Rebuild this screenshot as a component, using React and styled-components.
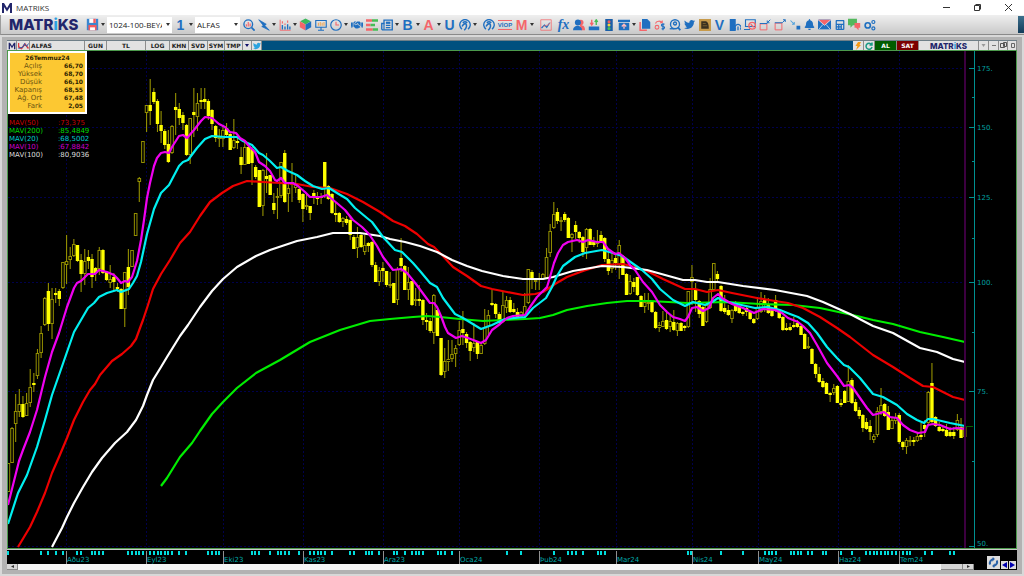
import React from 'react';
import styled, { createGlobalStyle } from 'styled-components';
import { FaBell, FaCalculator, FaHandshake, FaTwitter } from 'react-icons/fa';

const GlobalStyle = createGlobalStyle`
  * {
    box-sizing: border-box;
  }

  body {
    margin: 0;
    background: #c3c3c3;
    font-family: "Open Sans", sans-serif;
  }

  button {
    margin: 0;
    padding: 0;
    border: 0;
    background: none;
    font: inherit;
    color: inherit;
  }
`;

const BLUE = '#1f6fc0';
const RED = '#f4656a';
const NAVY = '#22266b';

// Window shell
const Screen = styled.div`
  display: flex;
  flex-direction: column;
  height: 100vh;
`;

const TitleBar = styled.header`
  display: flex;
  align-items: center;
  flex: none;
  height: 15px;
  padding-left: 1px;
  background: #ffffff;
`;

const Title = styled.h1`
  flex: 1;
  margin: 0 0 0 3px;
  font-size: 8px;
  font-weight: 400;
  line-height: 14px;
  color: #333333;
`;

const WindowButton = styled.button`
  display: flex;
  align-items: center;
  justify-content: center;
  width: 31px;
  height: 15px;
`;

// Toolbar
const Toolbar = styled.nav`
  display: flex;
  align-items: center;
  flex: none;
  height: 20px;
  padding-left: 8px;
  border-left: 1px solid #9c9c9c;
  border-bottom: 1px solid #8a8a8a;
  background: linear-gradient(#efefef, #c9c9c9);
`;

const Brand = styled.div`
  width: ${(props) => (props.$small ? 'auto' : '76px')};
  font-family: Inter, sans-serif;
  font-size: ${(props) => (props.$small ? '8px' : '15px')};
  font-weight: 800;
  line-height: 1;
  color: ${NAVY};

  i {
    font-style: normal;
    color: #2a9fe0;
  }
`;

const ToolButton = styled.button`
  display: flex;
  align-items: center;
  justify-content: center;
  flex: none;
  width: ${(props) => (props.$wide ? '18px' : '15px')};
  height: 16px;
  color: ${(props) => props.$color || BLUE};
  font-family: ${(props) => props.$font || '"Liberation Sans", sans-serif'};
  font-size: ${(props) => (props.$wide ? '6px' : '14px')};
  font-weight: 700;
  line-height: 16px;

  span {
    border: solid ${RED};
    border-width: 1px 0;
    line-height: 8px;
  }
`;

const CaretButton = styled.button`
  display: flex;
  align-items: center;
  justify-content: center;
  flex: none;
  width: 6px;
  height: 16px;
`;

const Gap = styled.span`
  flex: none;
  width: 3px;
`;

const Combo = styled.label`
  display: flex;
  align-items: center;
  flex: none;
  width: ${(props) => (props.$wide ? '65px' : '45px')};
  height: 16px;
  margin: 0 1px;
  padding-right: 2px;
  background: #ffffff;

  select {
    flex: 1;
    min-width: 0;
    height: 16px;
    margin-right: 4px;
    padding: 0 0 0 2px;
    border: 0;
    appearance: none;
    background: transparent;
    font-family: "Open Sans", sans-serif;
    font-size: 8px;
    color: #222222;
  }
`;

const ToolGrid = styled.div`
  display: grid;
  grid-template-columns: repeat(16, 1fr);
  width: 235px;
`;

const DockHandle = styled.div`
  align-self: stretch;
  width: 6px;
  margin: 1px 0 1px auto;
  background: linear-gradient(#3d6f8c, #123c5a);
`;

// Chart window
const Frame = styled.main`
  display: flex;
  flex-direction: column;
  flex: 1;
  min-height: 0;
  padding: 3px 5px 4px 5px;
  border: 2px solid #d8d8d8;
  background: #b2b2b2;
`;

const PanelBar = styled.div`
  display: flex;
  flex: none;
  height: 10px;
  border-top: 1px solid #6f7f88;
  background: #00507f;
`;

const Cell = styled.button`
  display: flex;
  align-items: center;
  justify-content: ${(props) => (props.$left ? 'flex-start' : 'center')};
  flex: none;
  width: ${(props) => props.$width}px;
  padding-left: ${(props) => (props.$left ? '1px' : '0')};
  border-right: 1px solid #8d8d8d;
  background: ${(props) => props.$bg || '#e2e2e2'};
  color: ${(props) => props.$color || '#222222'};
  font-family: "DejaVu Sans", sans-serif;
  font-size: 6px;
  font-weight: 700;
  line-height: 9px;
`;

const Spacer = styled.span`
  flex: 1;
`;

const Plot = styled.section`
  display: grid;
  flex: 1;
  min-height: 0;
  border: 1px solid #4c9a4c;
  background: #000000;

  > * {
    grid-area: 1 / 1;
  }
`;

const ChartSvg = styled.svg`
  display: block;
  width: 100%;
  height: 100%;
  min-height: 0;
  font-family: "DejaVu Sans", sans-serif;
  font-size: 7px;
`;

const Info = styled.aside`
  justify-self: start;
  align-self: start;
  font-family: "DejaVu Sans", sans-serif;
`;

const QuoteTable = styled.table`
  width: 79px;
  padding: 1px 2px 2px;
  border: 2px solid #ffffff;
  border-spacing: 0;
  background: #fcc832;
  line-height: 8px;

  th,
  td {
    height: 8px;
    padding: 0;
    text-align: right;
  }

  thead th {
    text-align: center;
    font-size: 6px;
    color: #2c2200;
  }

  tbody th {
    width: 30px;
    font-size: 7px;
    font-weight: 400;
    color: #6b5410;
  }

  td {
    font-size: 6px;
    font-weight: 700;
    color: #2c2200;
  }
`;

const AverageList = styled.ul`
  margin: 5px 0 0;
  padding: 0 0 0 1px;
  list-style: none;
`;

const Average = styled.li`
  display: flex;
  font-size: 7px;
  line-height: 8px;
  color: ${(props) => props.$color};

  span:first-child {
    width: 49px;
  }
`;

const Footer = styled.footer`
  display: flex;
  flex: none;
  height: 21px;
  border-top: 1px solid #c8c8c8;
  background: #000000;
`;

const Timeline = styled.div`
  display: flex;
  flex-direction: column;
  flex: 1;
  min-width: 0;
`;

const DateAxis = styled.div`
  height: 14px;
`;

const ScrollBar = styled.div`
  display: flex;
  height: 6px;
  background: #f6f6f6;
`;

const ScrollPart = styled.button`
  display: flex;
  align-items: center;
  justify-content: center;
  width: ${(props) => props.$width}px;
  height: 6px;
  border-right: 1px solid #8a8a8a;
  border-bottom: 1px solid #8a8a8a;
  background: #d6d6d6;
`;

const Corner = styled.div`
  display: flex;
  align-items: flex-end;
  justify-content: flex-end;
  gap: 1px;
  width: 43px;
  padding: 0 1px 1px 0;
`;

const CornerButton = styled.button`
  display: flex;
  align-items: center;
  justify-content: center;
  width: ${(props) => (props.$big ? '13px' : '7px')};
  height: ${(props) => (props.$big ? '13px' : '8px')};
  background: #dddddd;
`;

// Icons
const Icon = ({ size = 12, children }) => (
  <svg width={size} height={size} viewBox="0 0 16 16" fill="none" stroke={BLUE} strokeWidth="1.8" aria-hidden="true">
    {children}
  </svg>
);

const Caret = ({ width = 4, color = '#333333' }) => (
  <svg width={width} height="3" viewBox="0 0 4 3" aria-hidden="true">
    <path d="M0 0h4L2 3z" fill={color} />
  </svg>
);

const LogoM = ({ size = 12 }) => (
  <svg width={size} height={size} viewBox="0 0 12 12" aria-hidden="true">
    <path d="M1 11V1h2l3 5 3-5h2v10H9V5L6 9.500 3 5v6z" fill={NAVY} />
  </svg>
);

const Dropdown = ({ label }) => (
  <CaretButton aria-label={label}><Caret /></CaretButton>
);

const SaveIcon = () => (
  <Icon size={13}>
    <path d="M1 1h14v14H1z" fill="#3b86cf" stroke="none" />
    <path d="M4 1h8v5H4z" fill="#ffffff" stroke="none" />
    <path d="M9 1h3v5H9zM3 8.500h10V15H3z" fill="#f25c60" stroke="none" />
    <path d="M5 11.500h6V15H5z" fill="#ffffff" stroke="none" />
  </Icon>
);

const SearchIcon = () => (
  <Icon>
    <circle cx="7" cy="7" r="5.800" />
    <path d="M11.500 11.500L15.500 15.500" strokeWidth="2.400" />
    <path d="M4.500 10V7M7 10V4M9.500 10V6" stroke={RED} strokeWidth="1.500" />
  </Icon>
);

const BoltIcon = () => (
  <Icon>
    <path d="M1 1l10 6-2 1.500 6 6.500-10-5 2-1.500z" fill={BLUE} strokeWidth="1" />
  </Icon>
);

const BarsIcon = () => (
  <Icon>
    <path d="M1.500 1v14h14" stroke={RED} strokeWidth="1.200" />
    <path d="M4.500 14V8M8 14V10M11.500 14V7M14.500 14V10" />
    <path d="M4.500 6V3M8 8V6M11.500 5V2" stroke={RED} strokeWidth="1.500" />
  </Icon>
);

const PieIcon = () => (
  <Icon size={13}>
    <path d="M8 8L1.500 4 8 .500 14.500 4z" fill="#3db85c" stroke="none" />
    <path d="M8 8L1 4v7.500L8 15.500z" fill={RED} stroke="none" />
    <path d="M8 8l7-4v7.500L8 15.500z" fill={BLUE} stroke="none" />
  </Icon>
);

const MonitorIcon = () => (
  <Icon>
    <path d="M1 2h14v9H1zM4 15h8M8 11v4" strokeWidth="1.500" />
    <path d="M4.500 9V5M7 9V4M9.500 9V5M12 9V4" stroke="#f0a24a" strokeWidth="1.300" />
  </Icon>
);

const ClockIcon = () => (
  <Icon>
    <circle cx="8" cy="8" r="7" strokeWidth="1.600" />
    <path d="M8 3.500V8h4" stroke={RED} strokeWidth="1.500" />
  </Icon>
);

const DepthIcon = () => (
  <Icon>
    <path d="M0 2h8M0 8h6M0 14h9" stroke={RED} strokeWidth="3.500" />
    <path d="M8 2h8M6 8h6M9 14h7" stroke="#45bd55" strokeWidth="3.500" />
  </Icon>
);

const NewsIcon = () => (
  <Icon>
    <path d="M4 1.500h11v13H2.500A1.500 1.500 0 0 1 1 13V6h3z" />
    <path d="M4 6v8M6.500 8.500h6M6.500 11.500h6" strokeWidth="1.500" />
    <path d="M6.500 3.500h6v3h-6z" fill={BLUE} stroke="none" />
  </Icon>
);

const GlobeIcon = () => (
  <Icon>
    <path d="M4 13.500A7 7 0 1 1 12 13.500" />
    <path d="M7 15c3-3 4-6 2-9-3 0-4 2-5 4M5 5c2-2 5-2 6 0" strokeWidth="2" />
  </Icon>
);

const TrendIcon = () => (
  <Icon>
    <path d="M1 1h14v14H1z" stroke={RED} strokeWidth="1" />
    <path d="M2 12l4-4 3 3 4-6" strokeWidth="1.600" />
    <path d="M4 10l3-1 3-1 4-3" stroke={RED} strokeWidth="1" />
  </Icon>
);

const UsersIcon = () => (
  <Icon>
    <circle cx="10.500" cy="4.500" r="3.500" fill={RED} stroke="none" />
    <path d="M9 8c6 0 7 3 7 7h-5z" fill={RED} stroke="none" />
    <circle cx="6.500" cy="4.500" r="4" fill={BLUE} stroke="none" />
    <path d="M0 15c0-8 12-8 12 0z" fill={BLUE} stroke="none" />
  </Icon>
);

const TrayIcon = () => (
  <Icon>
    <path d="M1 10h14v5H1z" fill={BLUE} stroke="none" />
    <path d="M5 1v6M3 5l2 3 2-3" stroke={RED} />
    <path d="M11 8V2M9 4l2-3 2 3" stroke="#45bd55" />
  </Icon>
);

const TrafficIcon = () => (
  <Icon>
    <path d="M3 0h10v16H3z" fill="#1b5fa8" stroke="none" />
    <circle cx="8" cy="3.500" r="2" fill="#f25c60" stroke="none" />
    <circle cx="8" cy="8" r="2" fill="#f4d83c" stroke="none" />
    <circle cx="8" cy="12.500" r="2" fill="#45c555" stroke="none" />
  </Icon>
);

const ArchiveIcon = () => (
  <Icon>
    <path d="M0 1h16v3H0zM1 5h14v10H1z" fill={BLUE} stroke="none" />
    <path d="M8 13V8M5 10l3-3 3 3" stroke="#ffb9bb" />
  </Icon>
);

const CopyIcon = () => (
  <Icon>
    <path d="M1.500 4v11h9" stroke={RED} strokeWidth="2" />
    <path d="M4 0h7l4 4v9H4z" fill={BLUE} stroke="none" />
  </Icon>
);

const ExchangeIcon = () => (
  <Icon>
    <path d="M2 6c1-4 7-4 9-1M11 2v3H8" stroke={RED} strokeWidth="1.400" />
    <circle cx="4" cy="11" r="2.500" stroke={RED} strokeWidth="1.400" />
    <path d="M14 7c-5-2-5 3-2 3s3 4-2 3M12 6v9" strokeWidth="1.500" />
  </Icon>
);

const FindIcon = () => (
  <Icon>
    <circle cx="8" cy="7" r="6" />
    <path d="M12 11l3 4" strokeWidth="2.500" />
    <circle cx="8" cy="6" r="2" />
    <path d="M1 13h6" />
  </Icon>
);

const LedgerIcon = () => (
  <Icon>
    <path d="M0 0h16v16H0z" fill="#c79a4a" stroke="none" />
    <path d="M3 3h6c3 1 4 4 4 10H3z" fill="#3a3020" stroke="none" />
    <path d="M5 6h4M5 9h6" stroke="#8a6c34" strokeWidth="1" />
  </Icon>
);

const ReportIcon = () => (
  <Icon>
    <path d="M1 0h8v16H1z" fill={BLUE} stroke="none" />
    <path d="M9 14a4 4 0 1 1 6 0M12 10v5" strokeWidth="1.700" />
  </Icon>
);

const BlockedIcon = () => (
  <Icon>
    <path d="M2 1h13v9H2zM0 14h8" strokeWidth="1.500" />
    <circle cx="11" cy="9" r="4.500" stroke={RED} />
    <path d="M9 7l4 4" stroke={RED} />
  </Icon>
);

const ShrinkIcon = () => (
  <Icon>
    <path d="M1.500 6.500h9v8h-9z" stroke={RED} strokeWidth="1.300" />
    <path d="M1 6h10M15 1l-4 4M11 2v3h3" strokeWidth="1.300" />
  </Icon>
);

const ExpandIcon = () => (
  <Icon>
    <path d="M1.500 5.500h9v9h-9z" stroke={RED} strokeWidth="1.300" />
    <path d="M1 5h10M11 5l4-4M12 1h3v3" strokeWidth="1.300" />
  </Icon>
);

const SnapIcon = () => (
  <Icon>
    <path d="M2 2l5 5M7 4v3H4" stroke="#52a2dc" strokeWidth="1.400" />
    <path d="M10 9h5v5h-5z" fill={BLUE} stroke="none" />
  </Icon>
);

const MailIcon = () => (
  <Icon size={13}>
    <path d="M0 2h16v12H0z" fill={BLUE} stroke="none" />
    <path d="M0 2h16L8 9z" fill={RED} stroke="none" />
    <path d="M0 2l8 7 8-7M1 14l5-6M15 14l-5-6" stroke="#ffffff" strokeWidth="0.800" />
  </Icon>
);

const ChatIcon = () => (
  <Icon size={13}>
    <path d="M0 1h11v8H6l-3 3V9H0z" fill="#52b85c" stroke="none" />
    <path d="M8 6h7v6h-2v3l-3-3H8z" fill={RED} stroke="none" />
  </Icon>
);

const GearsIcon = () => (
  <Icon>
    <circle cx="5" cy="8.500" r="3.500" strokeWidth="2.200" />
    <circle cx="12.500" cy="4" r="2" strokeWidth="1.600" />
    <circle cx="12.500" cy="12.500" r="2" strokeWidth="1.600" />
  </Icon>
);

const RefreshIcon = ({ color = '#1a9a86', size = 8 }) => (
  <svg width={size} height={size} viewBox="0 0 16 16" fill="none" stroke={color} strokeWidth="3" aria-hidden="true">
    <path d="M13 5A6 6 0 1 0 14 10M14 1v5H9" />
  </svg>
);

// Chart data: candles are [high, open, close, low] in chart units, y grows downwards
const CANDLES = [
  [463, 492, 463, 492], [427, 463, 428, 463], [394, 424, 411, 442], [389, 412, 404, 417], [396, 404, 417, 418],
  [393, 416, 403, 416], [369, 403, 387, 407], [373, 383, 384, 392], [349, 376, 353, 379], [326, 353, 333, 358],
  [297, 325, 298, 326], [283, 291, 324, 331], [288, 324, 299, 339], [288, 293, 295, 303], [289, 291, 299, 306],
  [262, 288, 262, 289], [235, 265, 261, 284], [247, 260, 256, 269], [239, 256, 244, 257], [245, 245, 261, 262],
  [254, 260, 274, 292], [249, 274, 261, 285], [250, 257, 261, 269], [254, 259, 277, 288], [267, 268, 273, 281],
  [247, 269, 250, 275], [249, 250, 273, 274], [271, 272, 280, 281], [265, 283, 279, 288], [273, 277, 282, 291],
  [283, 287, 289, 292], [288, 289, 309, 309], [272, 309, 272, 327], [249, 267, 287, 295], [250, 267, 250, 267],
  [213, 236, 213, 236], [177, 182, 178, 202], [141, 163, 141, 163], [105, 113, 105, 132], [79, 105, 111, 125],
  [88, 92, 102, 104], [99, 101, 124, 132], [111, 125, 131, 143], [129, 131, 145, 149], [130, 144, 162, 163],
  [125, 153, 126, 154], [93, 107, 110, 135], [103, 109, 118, 125], [112, 115, 123, 130], [124, 125, 155, 156],
  [118, 155, 118, 164], [88, 112, 115, 137], [93, 117, 103, 131], [88, 100, 102, 109], [88, 99, 102, 109],
  [99, 101, 116, 120], [109, 110, 124, 130], [125, 126, 138, 142], [129, 139, 137, 147], [125, 139, 130, 147],
  [123, 128, 135, 137], [132, 134, 150, 150], [119, 148, 140, 149], [137, 141, 143, 149], [147, 157, 165, 174],
  [140, 165, 147, 165], [146, 147, 164, 164], [147, 149, 163, 185], [165, 167, 177, 179], [170, 170, 207, 207],
  [169, 206, 170, 216], [153, 176, 179, 193], [175, 175, 195, 195], [193, 203, 210, 214], [188, 198, 196, 219],
  [162, 196, 162, 198], [150, 153, 202, 203], [183, 194, 188, 212], [163, 185, 182, 202], [174, 188, 183, 193],
  [187, 189, 200, 203], [193, 194, 209, 222], [193, 207, 205, 210], [206, 206, 213, 220], [190, 193, 196, 204],
  [192, 197, 198, 205], [193, 196, 198, 204], [162, 162, 187, 198], [185, 186, 199, 200], [193, 194, 213, 214],
  [203, 213, 214, 222], [212, 213, 222, 223], [217, 222, 218, 227], [216, 219, 223, 225], [217, 220, 235, 240],
  [235, 237, 249, 249], [227, 248, 237, 258], [234, 235, 247, 248], [235, 252, 245, 255], [242, 243, 246, 252],
  [241, 242, 265, 267], [262, 265, 282, 282], [267, 282, 270, 286], [262, 268, 271, 282], [271, 271, 285, 287],
  [272, 286, 284, 288], [283, 283, 303, 303], [267, 300, 269, 305], [238, 258, 266, 272], [265, 266, 290, 290],
  [267, 290, 282, 300], [281, 281, 305, 306], [288, 301, 299, 306], [285, 299, 301, 306], [299, 300, 320, 325],
  [313, 320, 322, 330], [318, 321, 331, 333], [294, 333, 295, 344], [309, 310, 336, 336], [338, 338, 375, 376],
  [348, 372, 361, 378], [340, 362, 359, 371], [340, 359, 354, 362], [345, 354, 348, 367], [321, 345, 330, 346],
  [311, 329, 333, 345], [332, 334, 343, 348], [341, 342, 351, 361], [323, 348, 343, 352], [341, 342, 354, 359],
  [344, 354, 345, 354], [309, 344, 327, 345], [310, 327, 315, 335], [290, 303, 305, 306], [303, 304, 314, 318],
  [312, 314, 323, 324], [292, 322, 305, 323], [296, 308, 300, 313], [297, 300, 312, 313], [303, 309, 312, 313],
  [308, 312, 317, 317], [311, 317, 312, 318], [293, 316, 306, 316], [269, 303, 269, 304], [270, 272, 280, 289],
  [278, 281, 280, 290], [273, 280, 278, 290], [273, 279, 274, 280], [248, 278, 257, 279], [224, 253, 231, 257],
  [202, 228, 214, 229], [208, 212, 221, 224], [217, 221, 220, 231], [212, 214, 220, 222], [217, 218, 238, 238],
  [233, 238, 234, 252], [221, 225, 232, 239], [231, 232, 238, 243], [236, 237, 252, 257], [228, 248, 229, 259],
  [228, 229, 245, 245], [237, 242, 245, 247], [230, 244, 242, 247], [231, 235, 242, 243], [237, 238, 259, 262],
  [250, 259, 271, 275], [253, 269, 260, 273], [253, 258, 263, 270], [240, 265, 245, 279], [255, 256, 275, 275],
  [273, 274, 295, 295], [275, 294, 281, 295], [278, 282, 287, 292], [277, 277, 295, 296], [295, 296, 307, 307],
  [293, 307, 302, 313], [293, 304, 302, 310], [302, 302, 312, 313], [311, 312, 328, 329], [322, 328, 325, 332],
  [311, 327, 321, 327], [310, 320, 329, 330], [315, 327, 321, 332], [310, 322, 330, 331], [322, 331, 323, 336],
  [322, 323, 331, 331], [325, 326, 328, 331], [291, 327, 291, 328], [265, 282, 277, 305], [283, 289, 300, 312],
  [300, 301, 314, 318], [306, 307, 326, 326], [302, 322, 305, 323], [278, 308, 289, 309], [263, 290, 263, 291],
  [271, 274, 279, 281], [285, 286, 311, 312], [295, 308, 312, 314], [305, 310, 315, 316], [309, 319, 310, 323],
  [301, 305, 311, 312], [302, 306, 313, 314], [311, 312, 314, 316], [306, 308, 312, 316], [311, 312, 319, 320],
  [318, 319, 323, 324], [297, 319, 307, 320], [292, 312, 301, 313], [295, 300, 305, 312], [298, 304, 313, 314],
  [307, 308, 316, 317], [295, 300, 311, 312], [309, 310, 318, 319], [316, 317, 330, 331], [323, 328, 330, 331],
  [323, 327, 330, 331], [317, 325, 327, 328], [320, 323, 327, 328], [325, 326, 335, 335], [333, 334, 349, 349],
  [337, 348, 346, 349], [348, 349, 364, 364], [363, 364, 374, 378], [367, 374, 382, 383], [378, 381, 387, 388],
  [382, 383, 394, 394], [392, 393, 394, 402], [384, 393, 388, 395], [385, 386, 403, 403], [399, 403, 405, 407],
  [390, 391, 403, 403], [365, 402, 381, 402], [378, 380, 403, 404], [399, 402, 411, 412], [407, 410, 416, 419],
  [414, 415, 428, 432], [418, 422, 429, 430], [420, 426, 432, 440], [434, 440, 436, 443], [407, 435, 411, 437],
  [388, 412, 405, 415], [403, 404, 416, 417], [406, 412, 430, 430], [418, 429, 420, 429], [413, 421, 417, 424],
  [413, 415, 442, 444], [441, 442, 447, 450], [438, 447, 440, 454], [436, 441, 440, 446], [437, 440, 441, 446],
  [433, 441, 436, 442], [423, 435, 436, 440], [420, 425, 429, 437], [391, 423, 392, 424], [363, 383, 422, 423],
  [416, 417, 426, 427], [422, 427, 431, 432], [427, 429, 431, 432], [424, 430, 436, 437], [427, 432, 436, 437],
  [427, 432, 436, 439], [414, 430, 420, 431], [418, 427, 438, 438], [427, 437, 427, 438],
];

const candleX = (index) => 8.4 + index * 3.636;

const AVERAGE_LINES = [
  {
    color: '#00ee00',
    points: '161,486 167,478 180,457 192,443 200,431 212,414 223,402 237,388 256,373 280,360 310,342 340,330 370,321 390,319 413,317 427,316 440,317 460,319 483,321 503,320 525,319 540,318 553,315 567,310 587,306 607,303 627,301 650,301 687,303 727,302 760,304 793,305 820,308 857,316 873,320 893,324 920,332 943,337 965,342',
  },
  {
    color: '#ee0000',
    points: '18,547 30,527 37,512 45,493 52,473 59,457 67,438 74,420 83,402 90,390 95,384 100,375 112,361 122,354 131,346 136,339 140,328 143,320 148,305 153,289 161,274 170,260 180,243 190,232 200,216 210,202 222,193 233,186 247,181 263,182 280,183 297,184 313,187 330,188 347,194 363,202 380,212 393,221 405,226 417,234 428,244 434,247 442,255 453,267 467,276 481,286 492,289 507,292 523,295 535,294 543,292 555,284 567,277 583,271 602,265 623,264 635,267 647,271 663,279 685,289 695,289 707,292 718,290 732,293 757,298 775,301 788,303 803,308 820,317 837,328 850,337 873,355 893,367 910,378 923,386 933,387 953,397 965,400',
  },
  {
    color: '#ffffff',
    points: '52,547 62,528 67,517 74,503 83,487 92,472 102,458 115,443 127,432 136,420 143,406 147,395 153,380 161,367 167,357 180,336 188,325 200,307 212,291 223,279 237,267 256,256 270,250 297,241 317,237 333,233 360,233 380,236 390,239 405,242 420,246 437,252 452,260 467,266 482,271 503,276 523,279 543,279 553,277 573,271 602,266 623,267 647,270 683,280 695,280 707,282 718,282 743,286 775,290 807,296 823,302 850,314 873,326 893,333 920,348 937,352 953,359 965,362',
  },
  {
    color: '#00f0f0',
    points: '8,524 18,493 27,475 37,447 45,420 52,395 59,375 67,352 74,332 81,320 88,308 94,303 99,297 107,293 117,290 121,292 129,289 133,283 137,276 141,262 144,248 147,234 154,209 161,193 169,185 179,166 183,162 188,160 197,148 205,139 212,136 225,137 237,137 243,141 252,145 259,153 263,155 270,161 277,168 281,167 288,171 297,175 305,181 313,186 322,189 329,188 337,193 347,199 355,208 367,218 372,222 383,237 395,250 402,252 413,263 420,271 430,283 437,287 443,298 455,314 463,318 481,329 492,325 505,319 525,317 533,308 546,298 552,287 557,276 563,266 575,257 585,253 602,250 613,253 622,256 632,263 642,270 652,279 660,289 673,300 685,306 693,302 705,305 712,302 718,298 728,302 755,308 768,307 780,310 790,314 798,317 808,323 817,333 827,347 837,358 844,365 849,367 860,378 873,394 883,397 897,405 907,414 917,420 924,423 928,419 933,419 950,423 965,426',
  },
  {
    color: '#f000f0',
    points: '8,505 19,461 23,450 30,432 37,410 45,377 52,352 59,333 67,307 74,288 77,283 81,281 88,274 95,274 99,270 107,272 114,275 117,278 121,283 125,281 128,282 132,277 137,261 141,240 144,220 147,198 150,183 154,166 157,158 161,153 165,152 169,153 172,147 179,136 183,135 187,138 194,130 201,121 205,117 212,118 219,124 225,127 230,132 236,133 240,138 245,141 248,145 255,152 259,162 265,166 270,171 275,180 277,181 281,178 285,183 293,183 298,186 305,192 310,197 321,197 327,195 332,199 338,204 345,210 353,220 362,227 369,234 377,246 383,257 393,270 401,269 407,273 416,284 430,303 434,303 437,307 441,316 445,327 448,333 456,338 462,336 468,338 481,343 486,340 492,330 500,324 507,318 513,316 525,315 530,307 537,297 543,291 547,287 550,277 554,263 558,253 563,245 568,242 577,240 583,242 588,240 597,242 603,242 608,249 615,254 619,253 625,258 630,265 635,270 643,282 652,292 660,305 667,312 673,317 680,319 685,321 688,317 692,308 697,307 703,311 709,308 713,298 718,294 722,298 732,304 743,308 754,313 763,309 775,310 782,313 788,318 798,322 803,326 810,333 817,345 827,363 837,376 844,386 849,385 853,388 860,398 867,408 873,415 884,412 890,417 897,418 903,425 910,430 918,433 925,432 928,425 933,424 940,425 950,429 957,428 965,429',
  },
];

const PRICES = [[175, 68], [150, 127], [125, 197], [100, 282], [75, 391], [50, 546]];
const MINOR_TICKS = [97, 161, 238, 332, 461];

const MONTHS = [
  ['Aðu23', 66], ['Eyl23', 146], ['Eki23', 223], ['Kas23', 303], ['Ara23', 383], ['Oca24', 459],
  ['Þub24', 539], ['Mar24', 616], ['Nis24', 692], ['May24', 758], ['Haz24', 838], ['Tem24', 899],
];

const EVENTS = [
  8, 41, 48, 56, 63, 77, 81, 92, 95, 99, 103, 128, 132, 136, 139, 143, 150, 154, 158, 161, 165, 168, 172, 179, 186,
  208, 212, 216, 219, 252, 255, 259, 270, 278, 281, 285, 289, 299, 310, 314, 318, 321, 325, 332, 350, 354, 366, 369,
  372, 379, 394, 397, 405, 412, 416, 419, 423, 438, 441, 445, 452, 507, 521, 554, 568, 572, 576, 583, 598, 601, 605,
  688, 691, 721, 743, 765, 769, 772, 776, 791, 794, 798, 801, 808, 812, 823, 826, 841, 852, 866, 870, 874, 877, 881,
  885, 888, 892, 896, 903, 907, 910, 925, 932, 950, 954,
];

const QUOTE = [
  ['Açılış', '66,70'], ['Yüksek', '68,70'], ['Düşük', '66,10'], ['Kapanış', '68,55'], ['Ağ. Ort', '67,48'],
  ['Fark', '2,05'],
];

const AVERAGES = [
  ['MAV(50)', '73,375', '#c80000'],
  ['MAV(200)', '85,4849', '#00dd00'],
  ['MAV(20)', '68,5002', '#00cccc'],
  ['MAV(10)', '67,8842', '#cc00cc'],
  ['MAV(100)', '80,9036', '#dddddd'],
];

const percent = (value, start, length) => `${((value - start) / length) * 100}%`;

const Candle = ({ index, values }) => {
  const [high, open, close, low] = values;
  const x = candleX(index);
  const falling = close > open;
  const top = Math.min(open, close);
  const bottom = Math.max(open, close);

  return (
    <g>
      <path d={`M${x} ${high}V${top}M${x} ${bottom}V${low}`} stroke="#949000" strokeWidth="1.100" />
      {falling ? (
        <rect x={x - 1.7} y={top} width="3.400" height={Math.max(bottom - top, 2)} fill="#ffff00" />
      ) : (
        <rect x={x - 1.3} y={top + 0.5} width="2.600" height={Math.max(bottom - top - 1, 1)} fill="#000000" stroke="#949000" strokeWidth="1" />
      )}
    </g>
  );
};

const Chart = () => (
  <ChartSvg role="img" aria-label="ALFAS">
    <svg viewBox="8 51 1008 497" width="100%" height="100%" preserveAspectRatio="none" fill="none">
      <g stroke="#00004c" strokeDasharray="2 2">
        {PRICES.map(([price, y]) => <path key={price} d={`M8 ${y + 0.5}H964`} />)}
        {MONTHS.map(([month, x]) => <path key={month} d={`M${x + 0.5} 51V548`} />)}
      </g>
      {CANDLES.map((values, index) => <Candle key={index} index={index} values={values} />)}
      {AVERAGE_LINES.map(({ color, points }) => (
        <polyline key={color} points={points} stroke={color} strokeWidth="2.200" strokeLinejoin="round" />
      ))}
      <path d="M965 51V548" stroke="#3c0040" strokeWidth="2" />
      <path d="M966 426.500H973" stroke="#006400" />
      <g stroke="#009090">
        <path d="M974.500 51V548" />
        {PRICES.map(([price, y]) => <path key={price} d={`M969 ${y + 0.5}H974`} />)}
        {MINOR_TICKS.map((y) => <path key={y} d={`M972 ${y + 0.5}H974`} />)}
      </g>
    </svg>
    {PRICES.map(([price, y]) => (
      <text key={price} x={percent(977, 8, 1008)} y={percent(Math.min(y + 3, 546), 51, 497)} fill="#00a0a0">{price}.</text>
    ))}
  </ChartSvg>
);

const DateScale = () => (
  <ChartSvg role="img" aria-label="Tarih">
    <svg viewBox="7 550 967 14" width="100%" height="100%" preserveAspectRatio="none">
      {EVENTS.map((x) => <rect key={x} x={x - 1} y="551" width="2" height="4" fill="#00dcdc" />)}
      {MONTHS.map(([month, x]) => <rect key={month} x={x} y="551" width="1" height="13" fill="#909090" />)}
    </svg>
    {MONTHS.map(([month, x]) => (
      <text key={month} x={percent(x + 1, 7, 967)} y="12" fill="#00a8a8">{month}</text>
    ))}
  </ChartSvg>
);

const ChartToolbar = () => (
  <Toolbar>
    <Brand>MATR<i>i</i>KS</Brand>
    <ToolButton aria-label="Kaydet"><SaveIcon /></ToolButton>
    <Dropdown label="Kaydet menüsü" />
    <Combo $wide>
      <select aria-label="Sayfa"><option>1024-100-BEYAZ</option></select>
      <Caret />
    </Combo>
    <ToolButton>1</ToolButton>
    <Dropdown label="Pencere" />
    <Combo>
      <select aria-label="Sembol"><option>ALFAS</option></select>
      <Caret />
    </Combo>
    <ToolButton aria-label="Ara"><SearchIcon /></ToolButton>
    <ToolButton aria-label="Hızlı emir"><BoltIcon /></ToolButton>
    <Dropdown label="Emir menüsü" />
    <ToolButton aria-label="Grafik"><BarsIcon /></ToolButton>
    <Dropdown label="Grafik menüsü" />
    <ToolButton aria-label="Dağılım"><PieIcon /></ToolButton>
    <ToolButton aria-label="Ekran"><MonitorIcon /></ToolButton>
    <ToolButton aria-label="Saat"><ClockIcon /></ToolButton>
    <Dropdown label="Saat menüsü" />
    <ToolButton aria-label="Anlaşma"><FaHandshake size={12} /></ToolButton>
    <ToolButton aria-label="Derinlik"><DepthIcon /></ToolButton>
    <ToolButton aria-label="Haber"><NewsIcon /></ToolButton>
    <Dropdown label="Haber menüsü" />
    <ToolButton>B</ToolButton>
    <Dropdown label="B menüsü" />
    <ToolButton $color={RED}>A</ToolButton>
    <Dropdown label="A menüsü" />
    <ToolButton>U</ToolButton>
    <ToolButton aria-label="Dünya"><GlobeIcon /></ToolButton>
    <Dropdown label="Dünya menüsü" />
    <Gap />
    <ToolButton aria-label="Piyasa"><GlobeIcon /></ToolButton>
    <ToolButton $wide><span>VİOP</span></ToolButton>
    <ToolButton $color={RED}>M</ToolButton>
    <Dropdown label="M menüsü" />
    <Gap />
    <ToolButton aria-label="Trend"><TrendIcon /></ToolButton>
    <Gap />
    <ToolButton $font='"Liberation Serif", serif'><em>fx</em></ToolButton>
    <ToolButton aria-label="Kullanıcılar"><UsersIcon /></ToolButton>
    <ToolButton aria-label="Aktarım"><TrayIcon /></ToolButton>
    <ToolButton aria-label="Sinyal"><TrafficIcon /></ToolButton>
    <ToolButton aria-label="Arşiv"><ArchiveIcon /></ToolButton>
    <Dropdown label="Arşiv menüsü" />
    <ToolGrid>
      <ToolButton aria-label="Kopyala"><CopyIcon /></ToolButton>
      <ToolButton aria-label="Döviz"><ExchangeIcon /></ToolButton>
      <ToolButton aria-label="Bul"><FindIcon /></ToolButton>
      <ToolButton aria-label="Twitter"><FaTwitter size={11} /></ToolButton>
      <ToolButton aria-label="Defter"><LedgerIcon /></ToolButton>
      <ToolButton>V</ToolButton>
      <ToolButton aria-label="Rapor"><ReportIcon /></ToolButton>
      <ToolButton aria-label="Ekranı kapat"><BlockedIcon /></ToolButton>
      <ToolButton aria-label="Küçült"><ShrinkIcon /></ToolButton>
      <ToolButton aria-label="Büyüt"><ExpandIcon /></ToolButton>
      <ToolButton aria-label="Hizala"><SnapIcon /></ToolButton>
      <ToolButton aria-label="Alarm"><FaBell size={11} /></ToolButton>
      <ToolButton aria-label="Mesaj"><MailIcon /></ToolButton>
      <ToolButton aria-label="Hesap makinesi"><FaCalculator size={10} /></ToolButton>
      <ToolButton aria-label="Sohbet"><ChatIcon /></ToolButton>
      <ToolButton aria-label="Ayarlar"><GearsIcon /></ToolButton>
    </ToolGrid>
    <DockHandle />
  </Toolbar>
);

const PanelHeader = () => (
  <PanelBar>
    <Cell $width={10} aria-label="Matriks"><LogoM size={8} /></Cell>
    <Cell $width={13} aria-label="Grafik tipi">
      <svg width="11" height="8" viewBox="0 0 22 16" fill="none" strokeWidth="3" aria-hidden="true">
        <path d="M1 2v8l6 3 7-9 7 9" stroke="#e0383c" />
        <path d="M1 13l9-3 3-7 4 6 4-6" stroke="#2a5fb0" strokeWidth="2" />
      </svg>
    </Cell>
    <Cell $width={55} $left>ALFAS</Cell>
    <Cell $width={22}>GUN</Cell>
    <Cell $width={39}>TL</Cell>
    <Cell $width={24}>LOG</Cell>
    <Cell $width={19}>KHN</Cell>
    <Cell $width={19}>SVD</Cell>
    <Cell $width={17}>SYM</Cell>
    <Cell $width={18}>TMP</Cell>
    <Cell $width={9} aria-label="Diğer"><Caret width={6} color="#10106a" /></Cell>
    <Cell $width={10} $color="#2aa3e0" aria-label="Twitter"><FaTwitter size={8} /></Cell>
    <Spacer />
    <Cell $width={11} aria-label="Hızlı işlem">
      <svg width="8" height="8" viewBox="0 0 16 16" aria-hidden="true">
        <path d="M8 0h6l-3 6h3L4 16l3-8H3z" fill="#f59a14" />
      </svg>
    </Cell>
    <Cell $width={11} aria-label="Yenile"><RefreshIcon /></Cell>
    <Cell $width={22} $bg="#005c00" $color="#ffffff">AL</Cell>
    <Cell $width={22} $bg="#7c0000" $color="#ffffff">SAT</Cell>
    <Cell $width={60}><Brand $small>MATR<i>i</i>KS</Brand></Cell>
    <Cell $width={10} aria-label="Menü"><Caret width={5} color="#999999" /></Cell>
    <Cell $width={10} aria-label="Simge durumu">
      <svg width="4" height="4" viewBox="0 0 4 4" fill="none" stroke="#777777" aria-hidden="true"><path d="M0 1.500h4" /></svg>
    </Cell>
    <Cell $width={9} aria-label="Pencereler">
      <svg width="7" height="7" viewBox="0 0 7 7" fill="none" stroke="#555555" aria-hidden="true">
        <path d="M.5 1.500h4v4h-4zM3.500 .5h3v4h-3z" />
      </svg>
    </Cell>
    <Cell $width={9} aria-label="Büyüt">
      <svg width="5" height="5" viewBox="0 0 5 5" fill="none" stroke="#666666" aria-hidden="true"><path d="M1.500 .5h3v4h-3z" /></svg>
    </Cell>
  </PanelBar>
);

const App = () => (
  <Screen>
    <GlobalStyle />
    <TitleBar>
      <LogoM />
      <Title>MATRIKS</Title>
      <WindowButton aria-label="Simge durumuna küçült">
        <svg width="7" height="7" viewBox="0 0 7 7" stroke="#333333" aria-hidden="true"><path d="M0 3.500h7" /></svg>
      </WindowButton>
      <WindowButton aria-label="Önceki boyut">
        <svg width="7" height="7" viewBox="0 0 7 7" fill="none" stroke="#333333" aria-hidden="true">
          <path d="M.5 1.500h5v5h-5zM1.500 .5h5v5" />
        </svg>
      </WindowButton>
      <WindowButton aria-label="Kapat">
        <svg width="7" height="7" viewBox="0 0 7 7" stroke="#333333" aria-hidden="true"><path d="M0 0l7 7M7 0L0 7" /></svg>
      </WindowButton>
    </TitleBar>
    <ChartToolbar />
    <Frame>
      <PanelHeader />
      <Plot>
        <Chart />
        <Info>
          <QuoteTable>
            <thead>
              <tr><th colSpan={2}>26Temmuz24</th></tr>
            </thead>
            <tbody>
              {QUOTE.map(([label, value]) => (
                <tr key={label}>
                  <th scope="row">{label}</th>
                  <td>{value}</td>
                </tr>
              ))}
            </tbody>
          </QuoteTable>
          <AverageList>
            {AVERAGES.map(([label, value, color]) => (
              <Average key={label} $color={color}>
                <span>{label}</span>
                <span>:{value}</span>
              </Average>
            ))}
          </AverageList>
        </Info>
      </Plot>
      <Footer>
        <Timeline>
          <DateAxis><DateScale /></DateAxis>
          <ScrollBar>
            <ScrollPart $width={11} aria-label="Sola kaydır">
              <svg width="3" height="3" viewBox="0 0 3 3" aria-hidden="true"><path d="M3 0v3L0 1.500z" fill="#333333" /></svg>
            </ScrollPart>
            <Spacer />
            <ScrollPart $width={22} aria-label="Kaydırma kolu" />
            <ScrollPart $width={11} aria-label="Sağa kaydır">
              <svg width="3" height="3" viewBox="0 0 3 3" aria-hidden="true"><path d="M0 0v3l3-1.500z" fill="#333333" /></svg>
            </ScrollPart>
          </ScrollBar>
        </Timeline>
        <Corner>
          <CornerButton $big aria-label="Yenile">
            <svg width="11" height="11" viewBox="0 0 16 16" fill="none" stroke="#2a62a8" strokeWidth="3" aria-hidden="true">
              <path d="M3 11c-1-4 1-7 5-8M13 5c1 4-1 7-5 8" />
              <path d="M7 0l3 3-4 4zM9 16l-3-3 4-4z" fill="#2a62a8" stroke="none" />
            </svg>
          </CornerButton>
          <CornerButton aria-label="Geri">
            <svg width="5" height="6" viewBox="0 0 5 6" aria-hidden="true"><path d="M5 0v6L0 3z" fill="#0000b0" /></svg>
          </CornerButton>
          <CornerButton aria-label="İleri">
            <svg width="5" height="6" viewBox="0 0 5 6" aria-hidden="true"><path d="M0 0v6l5-3z" fill="#0000b0" /></svg>
          </CornerButton>
        </Corner>
      </Footer>
    </Frame>
  </Screen>
);

export default App;
